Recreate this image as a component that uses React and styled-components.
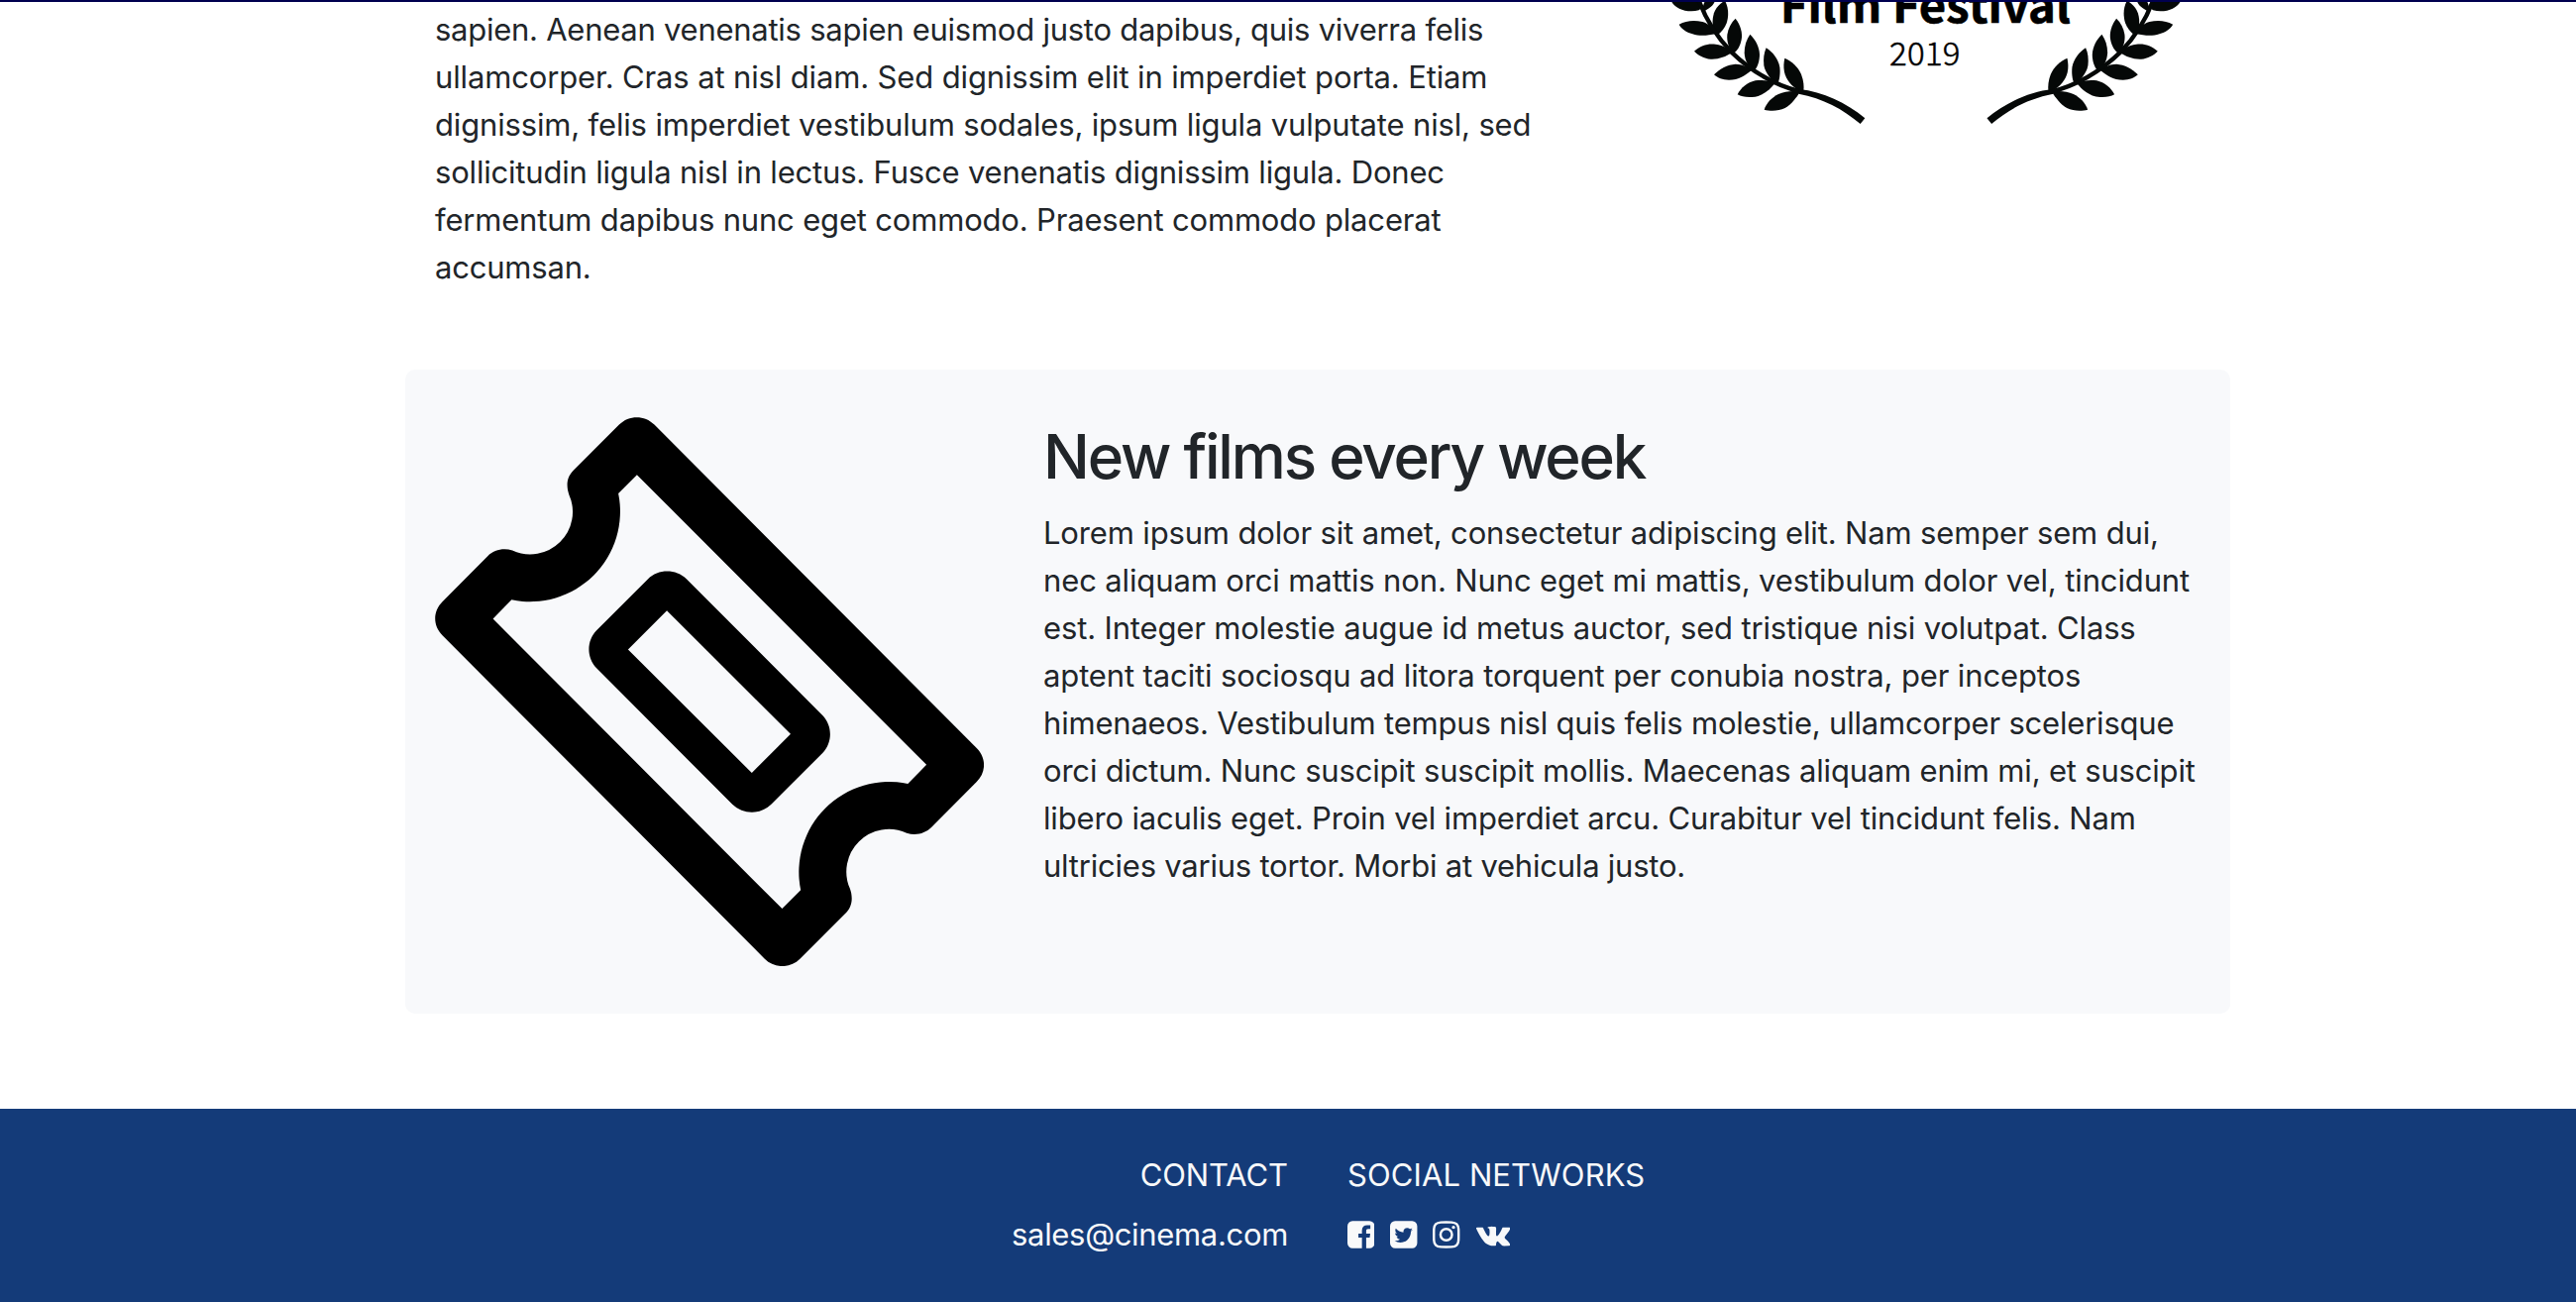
import React from "react";
import styled, { createGlobalStyle } from "styled-components";

const GlobalStyle = createGlobalStyle`
  *, *::before, *::after { box-sizing: border-box; }
  body {
    margin: 0;
    background: #fff;
    color: #212529;
    font-family: Inter, "Liberation Sans", sans-serif;
    font-size: 31px;
    line-height: 48px;
  }
`;

const Page = styled.div`
  display: flex;
  flex-direction: column;
  height: 1314px;
  overflow: hidden;
`;

const NavEdge = styled.div`
  flex: none;
  height: 2px;
  background: #00004f;
`;

const Container = styled.main`
  display: flex;
  flex-direction: column;
  flex: none;
  width: 1842px;
  height: 1117px;
  margin-left: 409px;
`;

const Feature = styled.section`
  display: grid;
  grid-template-columns: 1228px 614px;
  height: 371px;
`;

const Card = styled.section`
  display: grid;
  grid-template-columns: 614px 1228px;
  height: 650px;
  padding: 48px 0;
  background: #f8f9fb;
  border-radius: 10px;
`;

const Column = styled.div`
  padding: ${(p) => p.$top || 0}px 30px 0;
`;

const Title = styled.h2`
  margin: 0 0 15px;
  font-size: 62px;
  font-weight: 500;
  line-height: 77px;
  letter-spacing: -2.2px;
  white-space: nowrap;
`;

const Paragraph = styled.p`
  margin: 0;
`;

const Line = styled.span`
  display: block;
  white-space: nowrap;
  letter-spacing: ${(p) => p.$tracking}px;
`;

const Drawing = styled.svg`
  display: block;
  width: 554px;
  height: ${(p) => p.$height}px;
`;

const Footer = styled.footer`
  display: grid;
  grid-template-columns: 1fr 1fr;
  flex: 1;
  padding: 43px 0 0 60px;
  background: #143b79;
  color: #f8f9fa;
`;

const FooterColumn = styled.div`
  display: flex;
  flex-direction: column;
  align-items: ${(p) => p.$align};
  gap: 12px;
  padding: 0 30px;
`;

const Icons = styled.div`
  display: flex;
  align-items: center;
  gap: 15.8px;
  height: 48px;
`;

const Glyph = styled.svg`
  display: block;
  flex: none;
  width: ${(p) => p.$width}px;
  height: 32px;
  fill: currentColor;
`;

const ABOUT = [
  ["sapien. Aenean venenatis sapien euismod justo dapibus, quis viverra felis", -0.258],
  ["ullamcorper. Cras at nisl diam. Sed dignissim elit in imperdiet porta. Etiam", -0.137],
  ["dignissim, felis imperdiet vestibulum sodales, ipsum ligula vulputate nisl, sed", -0.16],
  ["sollicitudin ligula nisl in lectus. Fusce venenatis dignissim ligula. Donec", -0.189],
  ["fermentum dapibus nunc eget commodo. Praesent commodo placerat", -0.182],
  ["accumsan.", -0.2],
];

const FILMS = [
  ["Lorem ipsum dolor sit amet, consectetur adipiscing elit. Nam semper sem dui,", -0.156],
  ["nec aliquam orci mattis non. Nunc eget mi mattis, vestibulum dolor vel, tincidunt", -0.129],
  ["est. Integer molestie augue id metus auctor, sed tristique nisi volutpat. Class", -0.146],
  ["aptent taciti sociosqu ad litora torquent per conubia nostra, per inceptos", -0.123],
  ["himenaeos. Vestibulum tempus nisl quis felis molestie, ullamcorper scelerisque", -0.199],
  ["orci dictum. Nunc suscipit suscipit mollis. Maecenas aliquam enim mi, et suscipit", -0.191],
  ["libero iaculis eget. Proin vel imperdiet arcu. Curabitur vel tincidunt felis. Nam", -0.165],
  ["ultricies varius tortor. Morbi at vehicula justo.", -0.219],
];

const NETWORKS = [
  {
    name: "facebook",
    viewBox: "128 0 1536 1792",
    width: 27.43,
    d: "M1376 128q119 0 203.5 84.5t84.5 203.5v960q0 119-84.5 203.5t-203.5 84.5h-188v-595h199l30-232h-229v-148q0-56 23.5-84t91.5-28l122-1v-207q-63-9-178-9-136 0-217.5 80t-81.5 226v171h-200v232h200v595h-532q-119 0-203.5-84.5t-84.5-203.5v-960q0-119 84.5-203.5t203.5-84.5h960z",
  },
  {
    name: "twitter",
    viewBox: "128 0 1536 1792",
    width: 27.43,
    d: "M1408 610q-56 25-121 34 68-40 93-117-65 38-134 51-61-66-153-66-87 0-148.5 61.5t-61.5 148.5q0 29 5 48-129-7-242-65t-192-155q-29 50-29 106 0 114 91 175-47-1-100-26v2q0 75 50 133.5t123 72.5q-29 8-51 8-13 0-39-4 21 63 74.5 104t121.5 42q-116 90-261 90-26 0-50-3 148 94 322 94 112 0 210-35.5t168-95 120.5-137 75-162 24.5-168.5q0-18-1-27 63-45 105-109zm256-194v960q0 119-84.5 203.5t-203.5 84.5h-960q-119 0-203.5-84.5t-84.5-203.5v-960q0-119 84.5-203.5t203.5-84.5h960q119 0 203.5 84.5t84.5 203.5z",
  },
  {
    name: "instagram",
    viewBox: "128 0 1536 1792",
    width: 27.43,
    d: "M1152 896q0-106-75-181t-181-75-181 75-75 181 75 181 181 75 181-75 75-181zm138 0q0 164-115 279t-279 115-279-115-115-279 115-279 279-115 279 115 115 279zm108-410q0 38-27 65t-65 27-65-27-27-65 27-65 65-27 65 27 27 65zm-502-220q-7 0-76.5-.5t-105.5 0-96.5 3-103 10-71.5 18.5q-50 20-88 58t-58 88q-11 29-18.5 71.5t-10 103-3 96.5 0 105.5.5 76.5-.5 76.5 0 105.5 3 96.5 10 103 18.5 71.5q20 50 58 88t88 58q29 11 71.5 18.5t103 10 96.5 3 105.5 0 76.5-.5 76.5.5 105.5 0 96.5-3 103-10 71.5-18.5q50-20 88-58t58-88q11-29 18.5-71.5t10-103 3-96.5 0-105.5-.5-76.5.5-76.5 0-105.5-3-96.5-10-103-18.5-71.5q-20-50-58-88t-88-58q-29-11-71.5-18.5t-103-10-96.5-3-105.5 0-76.5.5zm768 630q0 229-5 317-10 208-124 322t-322 124q-88 5-317 5t-317-5q-208-10-322-124t-124-322q-5-88-5-317t5-317q10-208 124-322t322-124q88-5 317-5t317 5q208 10 322 124t124 322q5 88 5 317z",
  },
  {
    name: "vk",
    viewBox: "-64 0 1920 1792",
    width: 34.29,
    d: "M1853 520q23 64-150 294-24 32-65 85-40 51-55 72t-30.5 49.5-12 42 13 34.5 32.5 43 57 53q4 2 5 4 141 131 191 221 3 5 6.5 12.5t7 26.5-.5 34-25 27.5-59 12.5l-256 4q-24 5-56-5t-52-22l-20-12q-30-21-70-64t-68.5-77.5-61-58-56.5-15.5q-3 1-8 3.5t-17 14.5-21.5 29.5-17 52-6.5 77.5q0 15-3.5 27.5t-7.5 18.5l-4 5q-18 19-53 22h-115q-71 4-146-16.5t-131.5-53-103-66-70.5-57.5l-25-24q-10-10-27.5-30t-71.5-91-106-151-122.5-211-130.5-272q-6-16-6-27t3-16l4-6q15-19 57-19l274-2q12 2 23 6.5t16 8.5l5 3q16 11 24 32 20 50 46 103.5t41 81.5l16 29q29 60 56 104t48.5 68.5 41.5 38.5 34 14 27-5q2-1 5-5t12-22 13.5-47 9.5-81 0-125q-2-40-9-73t-14-46l-6-12q-25-34-85-43-13-2 5-24 16-19 38-30 53-26 239-24 82 1 135 13 20 5 33.5 13.5t20.5 24 10.5 32 3.5 45.5-1 55-2.5 70.5-1.5 82.5q0 11-1 42t-.5 48 3.5 40.5 11.5 39 22.5 24.5q8 2 17 4t26-11 38-34.5 52-67 68-107.5q60-104 107-225 4-10 10-17.5t11-10.5l4-3 5-2.5 13-3 20-.5 288-2q39-5 64 2.5t31 16.5z",
  },
];

function Lines({ items }) {
  return (
    <Paragraph>
      {items.map(([text, tracking]) => (
        <Line key={text} $tracking={tracking}>{text} </Line>
      ))}
    </Paragraph>
  );
}

const LEAVES = [
  "M55 -8C100 -22 155 -20 172 8C174 18 172 26 164 31C145 36 120 34 105 26C92 20 85 12 82 6Z",
  "M176 38C174 20 180 -5 205 -20L216 -10C214 8 205 18 195 25C189 29 182 32 176 38Z",
  "M104 74C125 62 150 60 175 66C195 72 208 85 215 103C190 108 165 110 145 103C125 97 112 88 104 74Z",
  "M150 155C170 138 190 131 215 134C240 137 255 148 264 160C245 172 225 180 200 179C180 177 162 168 150 155Z",
  "M210 226C228 208 250 196 275 194C295 194 312 203 324 212C305 228 285 242 255 242C235 242 222 236 210 226Z",
  "M281 286C292 265 310 250 335 244C355 241 378 244 395 252C380 270 358 292 325 294C305 295 292 292 281 286Z",
  "M362 332C368 312 385 295 405 285C425 276 450 274 470 278C460 295 445 315 425 327C405 337 380 337 362 332Z",
  "M243 2C253 20 256 45 248 70C243 85 232 97 222 105L210 95C204 75 204 50 213 32C220 18 232 8 243 2Z",
  "M275 56C290 75 297 100 293 120C289 140 280 155 268 162C255 148 248 125 250 105C253 85 262 68 275 56Z",
  "M319 104C335 120 347 140 348 165C348 185 342 203 332 214C315 205 303 185 302 160C302 138 308 120 319 104Z",
  "M368 145C388 158 404 178 409 203C411 220 409 240 403 252C385 245 365 222 361 198C359 178 361 160 368 145Z",
  "M424 176C445 185 465 203 474 225C481 243 483 262 481 276L465 272C445 262 428 240 423 218C420 203 421 190 424 176Z",
];

function Branch({ transform }) {
  return (
    <g transform={transform} fill="#050807">
      {LEAVES.map((d) => <path key={d} d={d} />)}
      <path d="M160 -10C182 55 212 105 262 157C322 215 392 258 474 278" fill="none" stroke="#050807" strokeWidth="13" />
      <path d="M468 270C540 278 610 310 667 358L653 375C600 330 540 298 466 284Z" />
    </g>
  );
}

function FestivalAward() {
  return (
    <Drawing $height={130} viewBox="0 0 554 130" role="img">
      <Branch transform="translate(-7 -2) scale(0.33333)" />
      <Branch transform="translate(560.8 -2) scale(-0.33333 0.33333)" />
      <g fontFamily='"Noto Sans CJK JP", "Noto Sans", sans-serif' fill="#000" stroke="#000">
        <text x="129.8" y="20.7" fontSize="47.3" fontWeight="700" strokeWidth="0.6">Film Festival</text>
        <text x="240" y="64.3" fontSize="33" fontWeight="300" letterSpacing="0.3" strokeWidth="0.5">2019</text>
      </g>
    </Drawing>
  );
}

function Ticket() {
  return (
    <Drawing $height={554} viewBox="95.5 148.5 1357.3 1357.3" role="img">
      <path
        fillRule="evenodd"
        d="M638 167L1435 967C1459 991 1459 1026 1435 1050L1323 1163C1308 1178 1285 1184 1262 1177A105 105 0 0 0 1122 1315C1130 1338 1127 1360 1110 1376L998 1488C974 1512 935 1512 911 1488L114 688C90 664 90 629 114 605L226 492C241 477 264 471 287 478A105 105 0 0 0 427 340C419 317 422 295 439 279L551 167C575 143 614 143 638 167Z
        M595 291L1311 1008L1265 1055A223 223 0 0 0 1000 1318L954 1364L239 647L285 600A223 223 0 0 0 549 337Z
        M718 549L1054 886C1079 912 1079 953 1054 979L927 1106C901 1132 858 1132 831 1106L495 769C470 743 470 702 495 676L622 549C648 523 691 523 718 549Z
        M669 627L975 932L879 1028L573 723Z"
      />
    </Drawing>
  );
}

export default function App() {
  return (
    <Page>
      <GlobalStyle />
      <NavEdge />
      <Container>
        <Feature>
          <Column $top={4}><Lines items={ABOUT} /></Column>
          <Column><FestivalAward /></Column>
        </Feature>
        <Card>
          <Column><Ticket /></Column>
          <Column $top={1}>
            <Title>New films every week</Title>
            <Lines items={FILMS} />
          </Column>
        </Card>
      </Container>
      <Footer>
        <FooterColumn $align="flex-end">
          <Line $tracking={-0.1}>CONTACT</Line>
          <Line $tracking={-0.33}>sales@cinema.com</Line>
        </FooterColumn>
        <FooterColumn $align="flex-start">
          <Line $tracking={0.1}>SOCIAL NETWORKS</Line>
          <Icons>
            {NETWORKS.map((n) => (
              <Glyph key={n.name} viewBox={n.viewBox} $width={n.width}>
                <path d={n.d} />
              </Glyph>
            ))}
          </Icons>
        </FooterColumn>
      </Footer>
    </Page>
  );
}
